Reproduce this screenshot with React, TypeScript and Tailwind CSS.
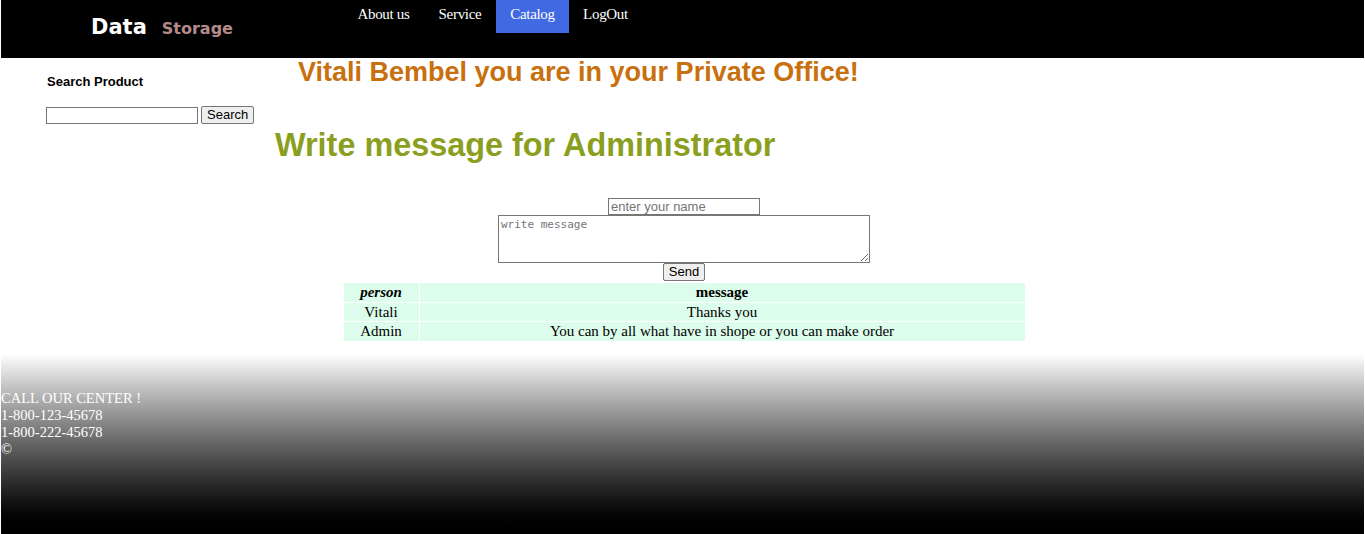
import React from "react";

export default function App() {
  const serif = { fontFamily: '"Liberation Serif", "Times New Roman", serif' };
  return (
    <div className="min-h-[534px] bg-white flex flex-col" style={serif}>
      <header className="mx-[1px] h-[58px] bg-black flex items-start">
        <div className="w-[342px] pl-[90px] pt-[14px] flex items-baseline gap-[15px]" style={{ fontFamily: '"DejaVu Sans", Verdana, sans-serif' }}>
          <span className="text-white font-bold text-[21px] leading-[26px]">Data</span>
          <span className="text-[#b48a8a] font-bold text-[16px]">Storage</span>
        </div>
        <nav className="flex text-white text-[15px] leading-[26px] tracking-[-0.3px]">
          <a className="w-[81px] text-center pt-[1px] h-[33px]">About us</a>
          <a className="w-[72px] text-center pt-[1px] h-[33px]">Service</a>
          <a className="w-[73px] text-center pt-[1px] h-[33px] bg-[#4169e1]">Catalog</a>
          <a className="w-[73px] text-center pt-[1px] h-[33px]">LogOut</a>
        </nav>
      </header>
      <div className="flex" style={{ fontFamily: '"Liberation Sans", Arial, sans-serif' }}>
        <aside className="w-[275px] pl-[46px] pt-[15px] shrink-0">
          <div className="font-bold text-[13px] leading-[18px] pl-[1px]">Search Product</div>
          <div className="flex items-center gap-[3px] mt-[15px]">
            <input className="w-[152px] h-[17px] border border-[#767676] bg-white" />
            <button className="h-[18px] px-[5px] text-[13px] leading-[14px] border border-[#767676] bg-[#efefef] rounded-[2px]">Search</button>
          </div>
        </aside>
        <div className="flex flex-col">
          <h1 className="ml-[23px] -mt-[1px] text-[27px] leading-[30px] font-bold text-[#c8700e]">Vitali Bembel you are in your Private Office!</h1>
          <h2 className="mt-[40px] text-[32.4px] leading-[36px] font-bold text-[#8b9f1f]">Write message for Administrator</h2>
        </div>
      </div>
      <div className="flex flex-col items-center mt-[35px] ml-[3px]">
        <input placeholder="enter your name" className="w-[152px] h-[17px] border border-[#767676] text-[13px] px-[2px] placeholder:text-[#757575]" style={{ fontFamily: '"Liberation Sans", Arial, sans-serif' }} />
        <textarea placeholder="write message" className="w-[372px] h-[48px] border border-[#767676] text-[11px] px-[2px] py-[1px] placeholder:text-[#757575]" style={{ fontFamily: '"DejaVu Sans Mono", monospace' }} />
        <button className="h-[18px] px-[5px] text-[13px] leading-[14px] border border-[#767676] bg-[#efefef] rounded-[2px]" style={{ fontFamily: '"Liberation Sans", Arial, sans-serif' }}>Send</button>
        <table className="mt-[1px] w-[683px] border-separate border-spacing-[1px] text-[15px] leading-[18.5px]">
          <tbody>
            <tr>
              <td className="w-[75px] bg-[#dcfcec] text-center italic font-bold">person</td>
              <td className="bg-[#dcfcec] text-center font-bold">message</td>
            </tr>
            <tr>
              <td className="bg-[#dcfcec] text-center">Vitali</td>
              <td className="bg-[#dcfcec] text-center">Thanks you</td>
            </tr>
            <tr>
              <td className="bg-[#dcfcec] text-center">Admin</td>
              <td className="bg-[#dcfcec] text-center">You can by all what have in shope or you can make order</td>
            </tr>
          </tbody>
        </table>
      </div>
      <footer className="mx-[1px] mt-[12px] h-[182px] bg-gradient-to-b from-white to-black text-white text-[14.5px] leading-[17px] pt-[36px]">
        <div>CALL OUR CENTER !</div>
        <div>1-800-123-45678</div>
        <div>1-800-222-45678</div>
        <div>©</div>
      </footer>
    </div>
  );
}
